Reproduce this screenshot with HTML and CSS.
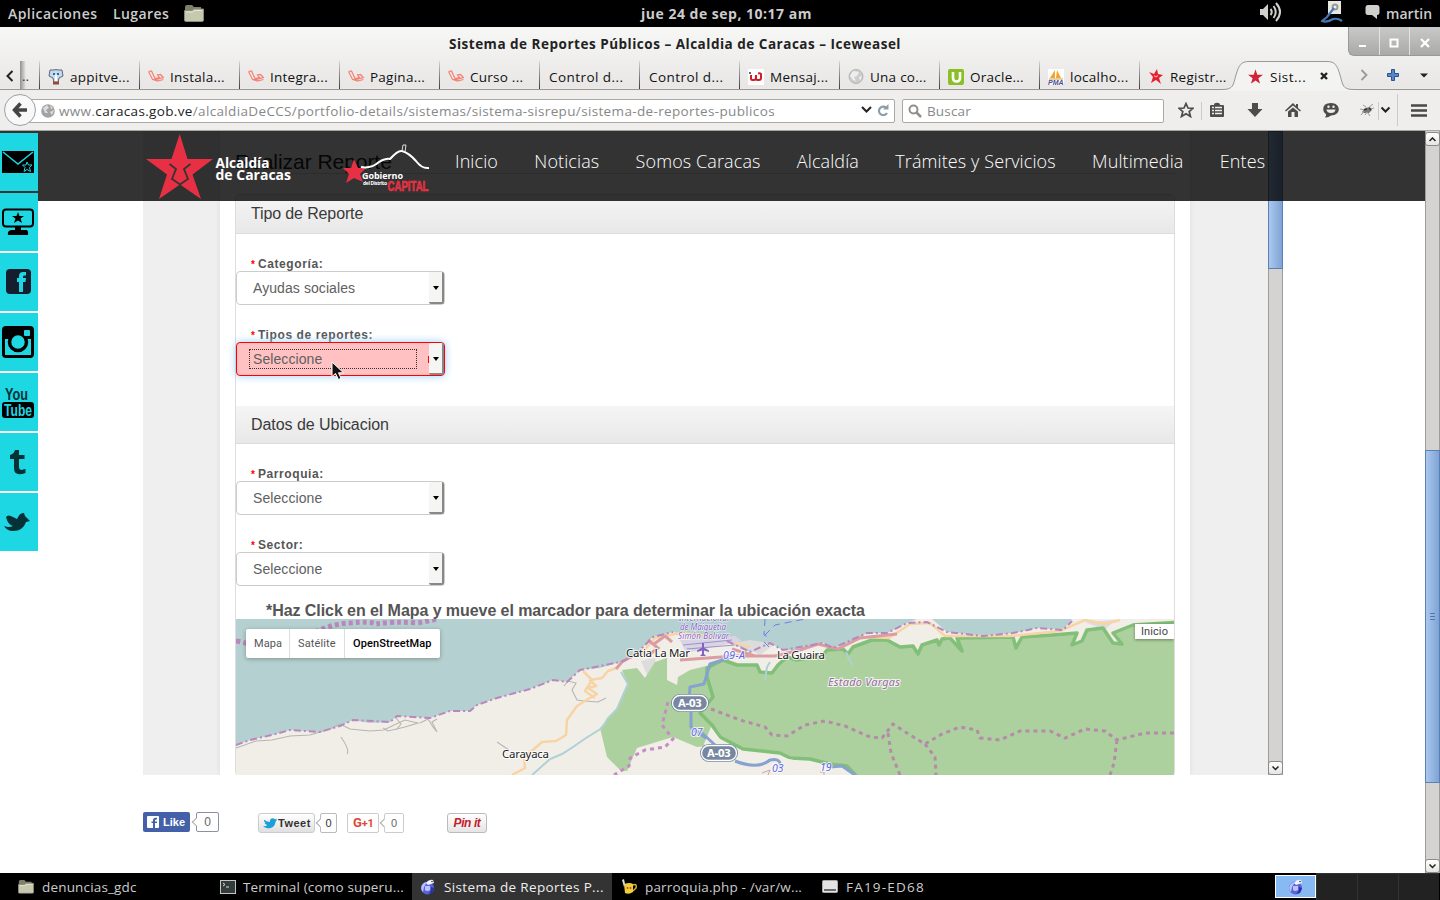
FILE: index.html
```html
<!DOCTYPE html>
<html lang="es">
<head>
<meta charset="utf-8">
<title>Sistema de Reportes Públicos - Alcaldia de Caracas</title>
<link rel="stylesheet" href="styles.css">
</head>
<body>
<svg width="0" height="0" class="defs">
  <defs>
    <symbol id="laravel" viewBox="0 0 16 16"><path d="M.5 2.500 3.500 2 7 9.500 11.500 8.600 9.500 6 12.500 5.500 15.300 8.500 8.500 10.400 9.500 12 15.500 10.500M.5 2.500 4.500 10.500 8.500 10.400M4.500 10.500 9.500 12" fill="none" stroke="#f58173" stroke-width="1.200"/></symbol>
    <symbol id="star" viewBox="0 0 68 66"><path d="M34 0 42 25H68L47 41 55 66 34 51 13 66 21 41 0 25H26Z"/></symbol>
    <symbol id="folder" viewBox="0 0 20 18"><path d="M1 3Q1 1 3 1H8L10 3H17V7H1Z" fill="#7e8069"/><path d="M.5 6.500H8L10 5H19.500V16Q19.500 17.500 18 17.500H2Q.5 17.500 .5 16Z" fill="#c6c8b0" stroke="#8b8d76"/><path d="M2 8H8.500L10.500 6.500H18" stroke="#e6e7d8" fill="none"/></symbol>
    <symbol id="weasel" viewBox="0 0 16 16"><circle cx="7.500" cy="9" r="6.500" fill="#5a63d8"/><path d="M2 6Q4 3 7 3L4 8 3 13Q0 10 2 6ZM5 7H10V11Q7 13 5 11Z" fill="#b9c3ff"/><path d="M6 4Q9 0 13 1L14 4 11 5 8 6Z" fill="#f2f4ff"/><path d="M11 8Q12 12 8 15L12 14 14 9Z" fill="#2a2f9e"/><circle cx="12" cy="2.500" r=".8" fill="#333"/></symbol>
    <symbol id="tweet" viewBox="0 0 26 20"><path d="M0 15Q5 16 8 13 4 12 3 9H5Q1 7 2 3 6 7 13 7C12 0 19-1 22 2L26 1 24 4 26 4 23 7C23 17 11 23 0 15Z"/></symbol>
    <symbol id="bird" viewBox="0 0 26 20"><path d="M0 14Q5 16 9 14 4 13 2 5Q4 2 9 5L13 7Q16 0 20 1L21 4 26 9 22 10Q19 19 9 19 3 19 0 14Z"/></symbol>
  </defs>
</svg>
<div class="screen">
  <div class="panel">
    <span class="p-app">Aplicaciones</span><span class="p-lug">Lugares</span>
    <svg class="p-folder" width="20" height="18"><use href="#folder"/></svg>
    <span class="p-clock">jue 24 de sep, 10:17 am</span>
    <div class="p-tray">
      <svg width="24" height="22" viewBox="0 0 24 22" fill="none" stroke="#d0d0cc" stroke-width="2"><path d="M1 8H4L9 3V19L4 14H1Z" fill="#d0d0cc" stroke="none"/><path d="M11.500 8Q14 11 11.500 14M14.500 5Q19 11 14.500 17M17 2Q25 11 17 20"/></svg>
      <svg class="tray-net" width="22" height="22" viewBox="0 0 22 22"><path d="M7 0H20V13H7Z" fill="#e8e8e3"/><circle cx="14" cy="6" r="3.500" fill="#999"/><circle cx="14" cy="6" r="1.500" fill="#eee"/><path d="M13 7 6 16 1 20Q6 22 12 18 17 17 21 20" fill="none" stroke="#4677b5" stroke-width="2.200"/></svg>
      <svg class="tray-chat" width="15" height="15" viewBox="0 0 15 15"><path d="M3 0H12Q14.500 0 14.500 3V8Q14.500 10 12 10V14L7 10H3Q.5 10 .5 8V3Q.5 0 3 0Z" fill="#d0d0cc"/></svg>
      <span class="p-user">martin</span>
    </div>
  </div>

  <div class="chrome">
    <div class="titlebar">Sistema de Reportes Públicos – Alcaldia de Caracas – Iceweasel
      <div class="winbtns">
        <span><svg width="10" height="10" viewBox="0 0 10 10"><path d="M1 8H8" stroke="#fff" stroke-width="2"/></svg></span>
        <span><svg width="10" height="10" viewBox="0 0 10 10"><path d="M1.500 1.500H8.500V8.500H1.500Z" fill="none" stroke="#fff" stroke-width="2"/></svg></span>
        <span><svg width="10" height="10" viewBox="0 0 10 10"><path d="M1 1 9 9M9 1 1 9" stroke="#fff" stroke-width="2.300"/></svg></span>
      </div>
    </div>
    <div class="tabs">
      <div class="tab-prev"><svg width="8" height="12" viewBox="0 0 8 12"><path d="M6.500 1 1.500 6 6.500 11" fill="none" stroke="#222" stroke-width="2"/></svg></div>
      <div class="tab-cut">..</div>
      <div class="tab"><svg width="16" height="16" viewBox="0 0 16 16"><path d="M2 1H6Q8 0 10 1H14L15 7 11 9 10 14H6L5 9 1 7Z" fill="#c9d8ea" stroke="#59677c"/><path d="M5 5H7M9 5H11" stroke="#147e9c" stroke-width="2"/><path d="M5 14H11" stroke="#984a2c" stroke-width="3"/><path d="M8 6V12" stroke="#fff" stroke-width="2"/></svg><span>appitve...</span></div>
      <div class="tab"><svg width="16" height="16"><use href="#laravel"/></svg><span>Instala...</span></div>
      <div class="tab"><svg width="16" height="16"><use href="#laravel"/></svg><span>Integra...</span></div>
      <div class="tab"><svg width="16" height="16"><use href="#laravel"/></svg><span>Pagina...</span></div>
      <div class="tab"><svg width="16" height="16"><use href="#laravel"/></svg><span>Curso ...</span></div>
      <div class="tab"><span>Control d...</span></div>
      <div class="tab"><span>Control d...</span></div>
      <div class="tab"><svg width="16" height="16" viewBox="0 0 16 16"><path d="M0 0H16V16H0Z" fill="#fff"/><path d="M3 6V9.500Q3 11 4.500 11H6Q8 11 8 9V6M8 9Q8 11 9.500 11H11Q13 11 13 9V5Q13 4 10 4.500" stroke="#cf1d26" stroke-width="2" fill="none"/><circle cx="2" cy="4" r="1" fill="#333"/></svg><span>Mensaj...</span></div>
      <div class="tab"><svg width="16" height="16" viewBox="0 0 16 16"><circle cx="8" cy="7.500" r="7" fill="#ccc" stroke="#b5b5b5"/><path d="M5 2 11 3 9 7 6 8 8 12 5 11 2 7ZM11 8 14 7 12 12Z" fill="#eee"/></svg><span>Una co...</span></div>
      <div class="tab"><svg width="16" height="16" viewBox="0 0 16 16"><rect width="16" height="16" rx="2" fill="#8abf25"/><path d="M5 3V9Q5 12.500 8.500 12.500T12 9V3" fill="none" stroke="#fff" stroke-width="2.600"/></svg><span>Oracle...</span></div>
      <div class="tab"><svg width="16" height="16" viewBox="0 0 16 16"><path d="M0 0H16V16H0Z" fill="#fff"/><path d="M7 1V9H2ZM9 1 13 9H8Z" fill="#f5a429"/><path d="M1 10H15" stroke="#c9a24e"/><text x="0" y="16" class="pma">PMA</text></svg><span>localho...</span></div>
      <div class="tab"><svg width="16" height="16" viewBox="0 0 16 16"><path d="M1 3 6 5 9 0 10 5 15 6 11 9 13 15 8 11 3 14 5 8Z" fill="#e7202d"/><path d="M6 6.500 8 8 10 6.500" stroke="#fff" stroke-width=".8" fill="none"/></svg><span>Registr...</span></div>
      <div class="tab-active">
        <svg class="tab-shape" width="132" height="30" viewBox="0 0 132 30"><path d="M0 28.500C12 28.500 11 24 14 14 17 4 19 .5 27 .5H105C113 .5 115 4 118 14 121 24 120 28.500 132 28.500V30H0Z" fill="#f3f3f2"/><path d="M0 28.500C12 28.500 11 24 14 14 17 4 19 .5 27 .5H105C113 .5 115 4 118 14 121 24 120 28.500 132 28.500" fill="none" stroke="#999894"/></svg>
        <svg class="ta-ic" width="15" height="15" viewBox="0 0 68 66" fill="#cf243a"><use href="#star"/></svg><span class="ta-t">Sist...</span>
        <svg class="ta-x" width="8" height="8" viewBox="0 0 8 8"><path d="M1 1 7 7M7 1 1 7" stroke="#222" stroke-width="2.400"/></svg>
      </div>
      <div class="tab-tools">
        <svg width="8" height="12" viewBox="0 0 8 12"><path d="M1.500 1 6.500 6 1.500 11" fill="none" stroke="#999" stroke-width="1.800"/></svg>
        <svg width="12" height="12" viewBox="0 0 12 12"><path d="M4.500.5H7.500V4.500H11.500V7.500H7.500V11.500H4.500V7.500H.5V4.500H4.500Z" fill="#5a87c4" stroke="#2a5594"/></svg>
        <svg width="8" height="5" viewBox="0 0 8 5"><path d="M0 .5H8L4 4.500Z" fill="#222"/></svg>
      </div>
    </div>
    <div class="navbar">
      <div class="url">
        <svg class="globe" width="14" height="14" viewBox="0 0 14 14"><circle cx="7" cy="7" r="6.800" fill="#a3a3a3"/><path d="M2 4 6 1 8 4 5 6 7 9 4 9ZM9 8 13 6 11 11ZM9 1 12 4 10 5Z" fill="#ddd"/></svg>
        <span class="addr">www.<b>caracas.gob.ve</b>/alcaldiaDeCCS/portfolio-details/sistemas/sistema-sisrepu/sistema-de-reportes-publicos</span>
        <svg class="url-dd" width="11" height="7" viewBox="0 0 11 7"><path d="M1 1 5.500 5.500 10 1" fill="none" stroke="#222" stroke-width="2"/></svg>
        <svg class="reload" width="12" height="12" viewBox="0 0 12 12"><path d="M9 3.500A4.300 4.300 0 1 0 10 9" fill="none" stroke="#8c9cab" stroke-width="2.200"/><path d="M6 5.500H11.500V0Z" fill="#8c9cab"/></svg>
      </div>
      <div class="back"><svg width="16" height="16" viewBox="0 0 16 16"><path d="M8.500 1.500 2.500 8 8.500 14.500M3 8H15" fill="none" stroke="#444" stroke-width="3.500"/></svg></div>
      <div class="search"><svg width="14" height="14" viewBox="0 0 14 14"><circle cx="5.500" cy="5.500" r="4" fill="none" stroke="#8f8f8f" stroke-width="2"/><path d="M8.500 8.500 13 13" stroke="#8f8f8f" stroke-width="2.500"/></svg><span>Buscar</span></div>
      <div class="tools">
        <svg width="16" height="16" viewBox="0 0 16 16"><path d="M8 1.500 10 6 15 6.300 11.200 9.500 12.500 14.500 8 11.700 3.500 14.500 4.800 9.500 1 6.300 6 6Z" fill="none" stroke="#4c4c4c" stroke-width="1.700"/></svg>
        <svg width="16" height="16" viewBox="0 0 16 16"><path d="M2 3H5Q5 .8 8 .8T11 3H14Q15 3 15 4V14Q15 15 14 15H2Q1 15 1 14V4Q1 3 2 3Z" fill="#4c4c4c"/><path d="M3 5.500H5M3 8.500H5M3 11.500H5M6 5.500H13M6 8.500H13M6 11.500H13" stroke="#eee" stroke-width="1.600"/></svg>
        <svg width="16" height="16" viewBox="0 0 16 16"><path d="M5 1H11V7H15.500L8 15 .5 7H5Z" fill="#4c4c4c"/></svg>
        <svg width="16" height="16" viewBox="0 0 16 16"><path d="M0 8.500 8 1 11 4V2H13V6L16 8.500 15 9.500 8 3.500 1 9.500Z" fill="#4c4c4c"/><path d="M3 9.500 8 5.500 13 9.500V15H9.500V10H6.500V15H3Z" fill="#4c4c4c"/></svg>
        <svg width="16" height="16" viewBox="0 0 16 16"><path d="M8 1C13 1 15.800 4 15.800 7.300S13 13.500 8 13.500Q5 15.800 2 15.300 3.500 14 3 12.300 .2 10.500 .2 7.300 .2 1 8 1Z" fill="#4c4c4c"/><path d="M3.500 7.500H12.500Q12 11 8 11T3.500 7.500Z" fill="#eee"/><circle cx="5.500" cy="4.800" r="1.200" fill="#eee"/><circle cx="10.500" cy="4.800" r="1.200" fill="#eee"/></svg>
        <svg width="16" height="16" viewBox="0 0 16 16"><path d="M3 10 6 6 11 5 13 8 10 11 5 11Z" fill="#777"/><path d="M1 7 6 8 2 13M6 13 8 10 11 14M7 5 4 3M9 6 14 2M11 7 15 6" stroke="#999" fill="none"/><path d="M5 8 8 7M10 6 12 8" stroke="#333" stroke-width="1.500"/></svg>
        <svg width="11" height="8" viewBox="0 0 11 8"><path d="M1.500 1.500 5.500 5.500 9.500 1.500" fill="none" stroke="#222" stroke-width="2"/></svg>
        <svg width="16" height="13" viewBox="0 0 16 13"><path d="M0 1.500H16M0 6.500H16M0 11.500H16" stroke="#484848" stroke-width="2.600"/></svg>
      </div>
      <div class="nav-line l1"></div><div class="nav-line l2"></div><div class="nav-line l3"></div>
    </div>
  </div>

  <div class="viewport">
    <div class="page">
      <div class="frame">
        <div class="frame-body">
          <div class="sheet">
            <div class="ghost">Realizar Reporte</div>
            <div class="card">
              <h2 class="sec first">Tipo de Reporte</h2>
              <div class="field"><label><i>*</i>Categoría:</label><div class="select"><span>Ayudas sociales</span><em></em></div></div>
              <div class="field"><label><i>*</i>Tipos de reportes:</label><div class="select error"><span>Seleccione</span><em></em>
                <svg class="cursor" width="14" height="20" viewBox="0 0 14 20"><path d="M1 1V15.500L4.500 12.500 7.500 18.500 10 17.300 7.500 11.800H12.500Z" fill="#111" stroke="#fff"/></svg></div></div>
              <h2 class="sec second">Datos de Ubicacion</h2>
              <div class="field"><label><i>*</i>Parroquia:</label><div class="select"><span>Seleccione</span><em></em></div></div>
              <div class="field last"><label><i>*</i>Sector:</label><div class="select"><span>Seleccione</span><em></em></div></div>
              <div class="hint">*Haz Click en el Mapa y mueve el marcador para determinar la ubicación exacta</div>
              <div class="map">
                <svg width="938" height="156" viewBox="236 619 938 156">
                  <path d="M236 619H1174V775H236Z" fill="#b5d0d0"/>
                  <path d="M236 745 250 740 272 735 290 730 320 732 340 726 353 720 370 723 390 722 397 716 415 717 430 718 450 711 470 711 477 705 497 698 530 689 553 680 567 682 580 670 600 668 620 662 632 657 643 647 653 637 673 632 690 636 727 641 750 652 762 651 770 643 783 650 800 650 823 643 833 648 850 643 867 633 887 633 907 623 917 619H932L947 632 983 636 1013 633 1037 628 1063 630 1072 619H1174V775H236Z" fill="#f1eee8"/>
                  <path d="M641 661 655 658 658 679 648 677ZM735 643 750 640 775 644 760 655ZM1085 622 1115 620 1105 630Z" fill="#dddcdd"/>
                  <path d="M622 670 637 668 645 678 655 662 667 658V680L677 685 678 677 690 670 710 665 720 745 697 747 673 737 637 748 627 771 620 770 607 757 600 728 618 707 628 685Z" fill="#add19e"/>
                  <path d="M707 668 723 660 737 665 757 665 760 672 772 673 778 665 787 657 797 660 823 655 827 650 843 649 848 654 853 647 872 640 887 640 900 647 913 646 918 654 922 645 937 640 939 645 942 639 950 638 962 651 957 638 1013 637 1016 648 1022 637 1053 635 1077 633 1072 645 1082 641 1087 630 1103 628 1113 643 1122 644 1113 633 1133 625 1180 622V782H862L847 766 830 764 810 759 790 758 780 753 743 749 720 737 712 725 700 713 713 697 707 677Z" fill="#add19e" stroke="#82bf79" stroke-width="3.500" stroke-linejoin="round"/>
                  <path d="M236 748 256 741 272 740 290 736 310 735 330 729 340 724 350 729 370 731 384 730 394 725 405 720 418 723 405 727 388 731 383 728M396 718 401 724 396 730M420 723 428 719 433 727 437 732 432 722 437 719M341 737Q350 750 347 754M497 742 509 750M564 686 568 681 576 683 572 690 577 700 584 701 598 702 606 698" fill="none" stroke="#b8b5b0" stroke-width="1.100"/>
                  <path d="M512 775 525 768 524 757 534 749 542 742 556 741 566 735 567 720 577 706 588 699 597 694 588 688 596 686 590 680 602 678 608 671 616 668M583 671 592 680 585 691 595 698M640 655 655 638 680 633 710 636 750 647M867 637 889 638 910 624 930 623 945 636 1010 636 1060 631 1085 620 1105 624 1120 620" fill="none" stroke="#f8d3a5" stroke-width="2.500" stroke-linejoin="round"/>
                  <path d="M616 669 622 662 636 654M648 640 658 648 650 654M654 644 665 636 672 642M680 660 735 656 775 656 800 650 818 644 838 649 860 638 897 634M732 649 755 656" fill="none" stroke="#dc9da0" stroke-width="3"/>
                  <path d="M532 775 540 768 550 759 562 754 573 747 586 738 602 728 608 718 617 709 623 695 628 684 621 672M765 680 767 667 770 662M846 652 852 665" fill="none" stroke="#aed1d5" stroke-width="2"/>
                  <path d="M680 640 735 636 742 641 686 653Z" fill="#d9d4e5"/><path d="M683 645 732 640M687 649 735 645" stroke="#9c94c3"/>
                  <path d="M236 745 250 740 272 735 290 730 320 732 340 726 353 720 390 722 397 716 430 718 450 711 470 711 477 705 497 698 530 689 553 680 567 682 580 670 620 662 632 657 643 647 653 637 673 632M727 641 750 652 770 643 783 650 823 643 833 648 867 633 887 633 907 623 927 622 947 632 983 636 1013 633 1037 628 1063 630 1072 621" fill="none" stroke="#b987bd" stroke-width="2" stroke-dasharray="7 3 2 3"/>
                  <path d="M236 641Q243 642 248 644M315 632Q335 623 350 623 370 621 376 624 393 621 418 623 428 621 438 619" fill="none" stroke="#b987bd" stroke-width="5" stroke-dasharray="4 3"/>
                  <g fill="none" stroke="#b58ba9" stroke-width="3" stroke-dasharray="4 4"><path d="M711 709 740 720 765 727 772 735 787 736 805 725 825 721 845 726 870 737 882 738 893 724 910 735 925 744 942 734 960 727 977 730 980 738 1000 740 1020 731 1050 731 1065 738 1085 729 1105 731 1117 740 1145 733 1174 733M888 733 891 753 900 775M925 744 935 757 936 775M1117 740 1114 763 1110 775"/><path d="M668 702 662 725 673 739 665 747 645 750 630 758 629 766 614 775" stroke="#c58dc4"/></g>
                  <path d="M765 619 764 635 770 638M765 635 775 625 805 619M764 642 772 650" fill="none" stroke="#6c7df0" stroke-dasharray="7 5"/>
                  <path d="M735 656 710 664 704 684 690 687 689 700M691 710 691 727 697 732 712 742" fill="none" stroke="#86a2cf" stroke-width="3" stroke-linejoin="round"/>
                  <path d="M711 727 722 742 742 753 778 757 810 763 845 769 851 775H735L719 760 704 744Z" fill="#f1eee8"/>
                  <path d="M702 733 715 745M735 761Q758 770 770 760 782 757 780 769M830 767 842 766 855 775" fill="none" stroke="#86a2cf" stroke-width="3"/>
                  <path d="M762 773 770 770 768 775M820 772H824V776" stroke="#cda6a6" fill="none"/>
                  <path d="M702 643H704V647.500L709 650.500V652L704 650.500V654L706 656H700L702 654V650.500L697 652V650.500L702 647.500Z" fill="#8461c4"/>
                  <g class="ap"><text x="679" y="621" textLength="50">Internacional</text><text x="680" y="630" textLength="46">de Maiquetía</text><text x="678" y="639" textLength="51">Simón Bolívar</text></g>
                  <g class="town"><text x="626" y="657" textLength="64">Catia La Mar</text><text x="777" y="659" textLength="48">La Guaira</text><text x="502" y="758" textLength="47">Carayaca</text></g>
                  <text class="state" x="828" y="686" textLength="72">Estado Vargas</text>
                  <g class="road"><text x="723" y="659" textLength="22">09-A</text><text x="691" y="736">07</text><text x="772" y="772">03</text><text x="820" y="771">19</text></g>
                  <g class="shield"><rect class="rim" x="671" y="694" width="38" height="18" rx="9"/><rect x="672.500" y="695.500" width="35" height="15" rx="7.500"/><rect class="rim" x="700" y="744" width="38" height="18" rx="9"/><rect x="701.500" y="745.500" width="35" height="15" rx="7.500"/><text x="678" y="707" textLength="24">A-03</text><text x="707" y="757" textLength="24">A-03</text></g>
                </svg>
                <div class="maptypes"><span>Mapa</span><span>Satélite</span><span class="on">OpenStreetMap</span></div>
                <div class="home">Inicio</div>
              </div>
            </div>
          </div>
        </div>
        <div class="sbar inner"><div class="thumb"></div><div class="sbtn down"><svg width="7" height="5" viewBox="0 0 7 5"><path d="M.5.5 3.500 3.500 6.500.5" fill="none" stroke="#222" stroke-width="1.500"/></svg></div></div>
      </div>
      <div class="share">
        <div class="fb"><svg width="12" height="12" viewBox="0 0 12 12"><rect width="12" height="12" rx="1" fill="#fff"/><path d="M8 12V7H10V5.500H8V4.500Q8 3.500 9 3.500H10V1.800H8.500Q6 1.800 6 4.500V5.500H4.500V7H6V12Z" fill="#4460a8"/></svg>Like</div>
        <div class="count c-fb">0</div>
        <div class="tw"><svg width="14" height="11" fill="#1b9fd9" viewBox="0 0 26 20"><use href="#tweet" width="26" height="20"/></svg>Tweet</div>
        <div class="count c-tw">0</div>
        <div class="gp">G<small>+1</small></div>
        <div class="count c-gp">0</div>
        <div class="pin">Pin it</div>
      </div>
      <div class="site-header">
        <svg class="brand" width="150" height="70" viewBox="143 131 150 70"><path d="M179.700 134 187.500 159H213L192.500 174.500 201 199 180 184.500 159 199 167 174.500 146 159H171.500Z" fill="#e73044"/><path d="M169.500 164 176 169 174 174 172 179 180 184.500 188 179 186 174 184 169 190.500 164" fill="none" stroke="#333" stroke-width="1.800"/><text x="215.500" y="168" textLength="54" lengthAdjust="spacingAndGlyphs">Alcaldía</text><text x="215.500" y="180" textLength="75.500" lengthAdjust="spacingAndGlyphs">de Caracas</text></svg>
        <svg class="gov" width="90" height="60" viewBox="342 141 90 60"><path d="M354 159 358 168H366L360 174 363 182 354 178 346 183 349 174 343 168H351Z" fill="#e73044"/><path d="M361 167Q371 169 379 162 386 158 390 159 398 150 402 151 409 153 416 161 422 169 429 168" fill="none" stroke="#fff" stroke-width="2"/><path d="M402 151 403 145H406L405 152" fill="none" stroke="#ddd"/><text x="362" y="179" class="g1" textLength="41">Gobierno</text><text x="363" y="185" class="g2" textLength="24">del Distrito</text><text x="387.500" y="191" class="g3" textLength="41" lengthAdjust="spacingAndGlyphs">CAPITAL</text></svg>
        <nav><a>Inicio</a><a>Noticias</a><a>Somos Caracas</a><a>Alcaldía</a><a>Trámites y Servicios</a><a>Multimedia</a><a>Entes</a></nav>
      </div>
      <div class="social">
        <div><svg width="32" height="24" viewBox="0 0 32 24"><path d="M0 1H32V23H0Z"/><path d="M1 2 16 14 31 2" fill="none" stroke="#1dd7e2" stroke-width="1.500"/><path d="M25 12 26.500 15H30L27.500 17.500 28.500 21.500 25 19.500 22 21.500 23 17.500 20.500 15H24Z" fill="none" stroke="#1dd7e2"/></svg></div>
        <div><svg width="32" height="28" viewBox="0 0 32 28"><rect x="1" y="1.500" width="30" height="17" rx="3" fill="none" stroke="#000" stroke-width="2"/><path d="M16 4 17.500 8H22L18.500 10.500 20 15 16 12.500 12 15 13.500 10.500 10 8H14.500Z"/><path d="M13 18H19V22H25Q27 24 26 27H6Q5 23 9 22H13Z"/></svg></div>
        <div><svg width="26" height="26" viewBox="0 0 26 26"><rect x="1" width="25" height="25" rx="4" fill="#141e2e"/><path d="M14 23V13H12V9H14V7Q14 3 18 3H21V6.500H19Q18 6.500 18 8V9H21L20.500 13H18V23Z" fill="#1dd7e2"/></svg></div>
        <div><svg width="32" height="32" viewBox="0 0 32 32"><rect width="32" height="32" rx="4"/><path d="M3 13H8V17Q10 25 16 25T24 17V13H29V29H3Z" fill="#1dd7e2"/><circle cx="16" cy="16" r="8.500" fill="#1dd7e2" stroke="#000" stroke-width="3.500"/><rect x="22" y="4" width="6" height="6" rx="1" fill="#1dd7e2"/></svg></div>
        <div><svg width="32" height="32" viewBox="0 0 32 32"><text x="3" y="14" class="yt" textLength="23" lengthAdjust="spacingAndGlyphs" fill="#063238">You</text><rect y="16" width="32" height="16" rx="3"/><text x="2" y="30" class="yt" textLength="28" lengthAdjust="spacingAndGlyphs" fill="#1dd7e2">Tube</text></svg></div>
        <div><svg width="16" height="26" viewBox="0 0 16 26"><path d="M5 1H9V6H14.500V10H9V18Q9 21 12 21 14 20 15.500 20V24Q4 28 4 19V10H0V6Q4 5 5 1Z" fill="#063137"/></svg></div>
        <div><svg class="bird" width="26" height="20" fill="#063137"><use href="#bird" width="26" height="20"/></svg></div>
      </div>
    </div>
    <div class="sbar outer"><div class="sbtn up"><svg width="7" height="5" viewBox="0 0 7 5"><path d="M.5 4 3.500 1 6.500 4" fill="none" stroke="#222" stroke-width="1.500"/></svg></div><div class="thumb"><i></i></div><div class="sbtn down"><svg width="7" height="5" viewBox="0 0 7 5"><path d="M.5.5 3.500 3.500 6.500.5" fill="none" stroke="#222" stroke-width="1.500"/></svg></div></div>
  </div>

  <div class="taskbar">
    <div class="task t1"><svg width="16" height="15" viewBox="0 0 20 18"><use href="#folder"/></svg><span>denuncias_gdc</span></div>
    <div class="task t2"><svg width="16" height="14" viewBox="0 0 16 14"><rect x=".5" y=".5" width="15" height="13" fill="#333b3b" stroke="#c5c5c5"/><path d="M3 3 5 4.500 3 6M6 7H9" stroke="#ddd" fill="none"/></svg><span>Terminal (como superu...</span></div>
    <div class="task t3"><svg width="16" height="16"><use href="#weasel"/></svg><span>Sistema de Reportes P...</span></div>
    <div class="task t4"><svg width="16" height="16" viewBox="0 0 16 16"><path d="M3 5Q9 3 12 5L12 13Q8 16 4 14Z" fill="#f0ce37"/><path d="M12 6Q16 4 15 9L12 12" fill="none" stroke="#d9b52b" stroke-width="1.500"/><path d="M1 1 3 0 4 5 3 8Z" fill="#ddd"/><circle cx="6.500" cy="9" r="1" fill="#c44"/><circle cx="9.500" cy="9" r="1" fill="#c44"/></svg><span>parroquia.php - /var/w...</span></div>
    <div class="task t5"><svg width="16" height="13" viewBox="0 0 16 13"><rect x=".5" y=".5" width="15" height="12" rx="1" fill="#e4e4e4" stroke="#aaa"/><path d="M2 10H14" stroke="#444" stroke-width="1.500"/></svg><span>FA19-ED68</span></div>
    <div class="spaces"><div class="cur"><svg width="16" height="16"><use href="#weasel"/></svg></div><div></div><div></div><div></div></div>
  </div>
</div>
</body>
</html>
```
FILE: styles.css
```css
*{box-sizing:border-box}
body{margin:0;background:#fff}
svg{display:block;flex:none}
.defs{position:absolute}
.screen{width:1440px;height:900px;display:flex;flex-direction:column;overflow:hidden;font-family:"Open Sans","Noto Sans",sans-serif;font-size:14px;white-space:nowrap}
.panel{height:27px;background:#000;color:#ccc;display:flex;align-items:center;font-weight:600;line-height:29px;flex:none;padding-left:8px;position:relative}
.p-app{width:105px;letter-spacing:.45px}
.p-lug{width:71px;letter-spacing:.4px}
.p-folder{margin-top:-2px}
.p-clock{position:absolute;left:0;right:0;text-align:center;padding-left:13px;font-weight:700;letter-spacing:.5px}
.p-tray{margin-left:auto;display:flex;width:181px;align-items:center}
.p-tray svg{margin-top:-3px}
.p-tray .tray-net{margin-left:38px}
.p-tray .tray-chat{margin-left:22px}
.p-user{margin-left:6px;letter-spacing:.05px}
.chrome{height:103px;flex:none;background:linear-gradient(#f7f7f6,#e8e7e6 60px,#efeeed 64px,#efeeed);display:flex;flex-direction:column}
.titlebar{height:34px;line-height:34px;text-align:center;font-weight:700;font-size:13.500px;color:#222;padding-right:90px;position:relative;letter-spacing:.51px}
.winbtns{position:absolute;right:0;top:0;width:92px;height:29px;display:flex;background:linear-gradient(#c9c9c8,#a9a9a7);border:1px solid #999;border-width:0 0 1px 1px;border-radius:0 0 0 6px}
.winbtns span{flex:1;display:flex;align-items:center;justify-content:center;border-left:1px solid #e2e2e1;padding:3px 1px 0 0}
.winbtns span:first-child{border:0}
.tabs{height:29px;display:flex;border-bottom:1px solid #999894;flex:none;font-size:13.500px;color:#111}
.tab-prev{width:20px;padding:9px 0 0 6px}
.tab-cut{width:19px;padding:6px 0 0 2px;background:linear-gradient(90deg,#8f8f8e,transparent 6px);color:#333}
.tab{width:100px;display:flex;align-items:center;gap:6px;padding:3px 0 0 8px;border-left:1px solid;border-image:linear-gradient(#dedddc,#333) 1}
.tab svg+span{letter-spacing:.25px}
.tab span:first-child{padding-left:1px;letter-spacing:.45px}
.tab-active{position:relative;width:106px;flex:none;margin-left:-5px;display:flex;padding-top:3px;align-items:center}
.tab-shape{position:absolute;left:-12px;top:0}
.ta-ic,.ta-t,.ta-x{position:relative}
.ta-ic{margin-left:14px}
.ta-t{margin-left:7px;letter-spacing:.5px}
.ta-x{margin-left:14px;margin-top:-2px}
.tab-tools{display:flex;align-items:center;gap:21px;padding-left:20px}
.tab-tools svg:nth-child(2){margin-left:-2px}
.navbar{height:40px;display:flex;align-items:center;position:relative;padding-left:20px}
.nav-line{position:absolute;width:1px;background:#c8cbd0;top:12px;height:18px}
.l1{left:1201px}
.l2{left:1378px}
.l3{left:1397px;top:4px;height:32px}
.url{width:875px;height:24px;margin-top:1px;background:#fff;border:1px solid #aaa9a6;border-radius:2px;display:flex;align-items:center;color:#888;padding-left:20px;font-size:13.500px}
.addr{width:806px;margin-left:4px;letter-spacing:.35px}
.addr b{font-weight:400;color:#222}
.url-dd{margin:-2px 0 0 -4px}
.reload{margin:-1px 0 0 5px}
.back{position:absolute;left:4px;top:4px;width:32px;height:32px;border:1px solid #9ba1a8;border-radius:50%;background:#f8f8f8;display:flex;align-items:center;justify-content:center}
.search{margin:1px 0 0 7px;width:262px;height:24px;background:#fff;border:1px solid #aaa9a6;border-radius:2px;display:flex;align-items:center;gap:5px;padding-left:5px;color:#888;font-size:13.500px;letter-spacing:.15px}
.tools{display:flex;align-items:center;margin-left:14px}
.tools svg+svg{margin-left:15px}
.tools svg:nth-child(n+3):nth-child(-n+5){margin-left:22px}
.tools svg:nth-child(6){margin-left:20px}
.tools svg:nth-child(7){margin-left:5px}
.tools svg:nth-child(8){margin-left:20px}
.viewport{height:743px;flex:none;display:flex;border-top:1px solid #a8a7a2}
.page{width:1425px;height:742px;position:relative;background:#fff;padding-left:143px;overflow:hidden}
.frame{width:1140px;height:644px;display:flex}
.frame-body{width:1125px;background:#efefef;padding-left:77px;overflow:hidden}
.sheet{width:970px;height:644px;background:#fff;padding:0 15px;box-shadow:0 0 5px #ddd;overflow:hidden}
.ghost{height:43px;border-bottom:1px solid #ddd;margin-bottom:20px;font:21px/62px "Liberation Sans",sans-serif;color:#222;letter-spacing:-.05px}
.card{border:1px solid #ddd;border-radius:4px;font-family:"Liberation Sans",Arial,sans-serif}
.sec{margin:0;height:38px;border-bottom:1px solid #dcdcdc;background:linear-gradient(#f5f5f5,#e8e8e8);padding-left:15px;font-size:16px;font-weight:400;line-height:37px;color:#3a3a3a;letter-spacing:-.05px}
.sec.first{height:39px;margin-bottom:22px;letter-spacing:-.13px}
.sec.second{margin:8px 0 22px}
.field{height:71px}
.field.last{height:63px}
.field label{display:block;height:15px;line-height:16px;padding-left:15px;font-size:12px;font-weight:700;color:#555;letter-spacing:.6px}
.field i{color:red;font-style:normal;font-size:10px;margin-right:3px;letter-spacing:0;font-weight:700}
.select{width:209px;height:34px;border:1px solid #ccc;border-radius:4px;position:relative;display:flex;justify-content:space-between;font-size:14px;line-height:33px;color:#606060;letter-spacing:.08px;padding-left:16px}
.select em{width:15px;height:32px;background:#f5f5f3;border-right:2px solid #888;border-bottom:2px solid #888;border-radius:2px;display:flex;align-items:center;justify-content:center;padding:2px 0 0 1px}
.select em:after{content:"";border:3.500px solid transparent;border-top:4px solid #000;border-bottom:0}
.select.error{border-color:red;background:#ffc1c1;box-shadow:0 0 8px #9acdf5;padding-left:12px}
.select.error span{width:168px;height:20px;margin-top:6px;border:1px dotted #333;line-height:19px;padding-left:3px}
.select.error em:before{content:"";position:absolute;left:191px;top:13px;width:1px;height:7px;background:red}
.cursor{position:absolute;left:94px;top:18px}
.hint{height:19px;padding-left:30px;font-size:16px;font-weight:700;line-height:21px;color:#555;letter-spacing:-.065px}
.map{height:156px;position:relative;overflow:hidden}
.map text{paint-order:stroke;stroke:#fff;stroke-width:2px;stroke-opacity:.8;font-family:"Noto Sans",sans-serif}
.map .ap text{font-size:8px;font-style:italic;fill:#8461c4;stroke-width:1px}
.map .town text{font-size:11.500px;fill:#222}
.map .state{font-size:11px;font-style:italic;fill:#996aa5}
.map .road text{font-size:10.500px;font-style:italic;fill:#6265e8}
.map .shield text{font-size:10px;font-weight:700;fill:#fff;stroke:none;font-family:"DejaVu Sans",sans-serif}
.shield rect{fill:#77879f;stroke:#fff;stroke-width:1.300}
.shield .rim{stroke:none}
.maptypes{position:absolute;left:10px;top:10px;height:29px;display:flex;background:#fff;border-radius:2px;box-shadow:0 1px 4px rgba(0,0,0,.3);font:11px/29px Roboto,sans-serif;color:#565656;letter-spacing:.12px}
.maptypes span{padding:0 8px;border-right:1px solid #ddd;width:44px}
.maptypes span+span{width:55px}
.maptypes span.on{color:#000;font-weight:500;border:0;width:95px}
.home{position:absolute;right:0;top:5px;width:39px;height:15px;background:#fff;box-shadow:0 1px 3px rgba(0,0,0,.4);font:11px/15px Roboto,sans-serif;color:#444;text-align:center;letter-spacing:.1px}
.sbar{width:15px;background:#d5d3d1;border:1px solid #9d9c9a;border-width:0 1px;flex:none;display:flex;flex-direction:column}
.sbar .thumb{margin:0 -1px;border:1px solid #5a81b5;background:linear-gradient(90deg,#abc8ed,#7fa3d6)}
.inner .thumb{height:138px}
.sbtn{height:14px;margin:0 -1px;border:1px solid #8b8a88;border-radius:3px;background:linear-gradient(#fff,#e5e5e3);display:flex;align-items:center;justify-content:center}
.sbtn.down{margin-top:auto}
.outer .up{margin-top:1px}
.outer .thumb{height:333px;margin-top:304px;display:flex;align-items:center;justify-content:center}
.outer .thumb i{width:5px;height:8px;background:repeating-linear-gradient(#4d77ad 0 1px,transparent 1px 3px)}
.share{display:flex;margin-top:37px;font-family:"Liberation Sans",Arial,sans-serif;font-size:11px;height:22px}
.fb{width:47px;height:20px;border-radius:2px;background:#4460a8;color:#fff;display:flex;align-items:center;gap:4px;padding-left:4px;font-weight:700;font-size:11px}
.count{border:1px solid #bbb;border-radius:2px;height:20px;margin-top:1px;line-height:18px;text-align:center;position:relative;color:#666;background:#fff}
.count:before{content:"";position:absolute;left:-4px;top:6px;width:5px;height:5px;border:1px solid #aaa;border-width:0 0 1px 1px;transform:rotate(45deg);background:#fff}
.c-fb{width:23px;margin:0 0 0 6px;border-color:#8b90a0;font-size:12px}
.c-tw{width:17px;margin-left:5px;color:#333}
.c-gp{width:20px;margin-left:5px;border-color:#ccc}
.tw{margin:1px 0 0 39px;width:57px;height:20px;border:1px solid #ccc;border-radius:3px;background:linear-gradient(#fff,#e0e0e0);color:#333;font-weight:700;display:flex;align-items:center;padding-left:4px;gap:1px;font-size:11px;letter-spacing:.5px}
.gp{margin:1px 0 0 10px;width:32px;height:20px;border:1px solid #ccc;border-radius:2px;color:#dc4a38;font:700 13px/18px Roboto,sans-serif;padding-left:5px;letter-spacing:-.2px}
.gp small{font-size:11px}
.pin{margin:1px 0 0 43px;width:40px;height:20px;border:1px solid #bbb;border-radius:3px;background:linear-gradient(#fff,#e5e5e5);color:#c1202c;font-weight:700;font-style:italic;font-size:12px;line-height:18px;text-align:center;letter-spacing:-.4px}
.site-header{position:absolute;left:0;top:0;width:1425px;height:70px;background:rgba(0,0,0,.8);display:flex;padding-left:143px}
.brand text{font:700 15px "Open Sans",sans-serif;fill:#fff}
.gov{margin:10px 0 0 49px}
.gov text{fill:#fff;font-family:"Open Sans",sans-serif;font-weight:700}
.gov .g1{font-size:9px}
.gov .g2{font-size:5px}
.gov .g3{font-size:14px;fill:#e73044;font-family:"Liberation Sans",sans-serif;stroke:#e73044;stroke-width:.7}
nav{display:flex;gap:36.300px;margin-left:23px;font:300 18px/60px "Open Sans",sans-serif;color:#fff;letter-spacing:.1px}
.social{position:absolute;left:0;top:2px;width:38px;display:flex;flex-direction:column;gap:2px}
.social div{height:58px;background:#1dd7e2;display:flex;align-items:center;justify-content:center;padding-right:2px}
.social .bird{margin-left:-2px}
.yt{font:700 16px "Liberation Sans Narrow","Liberation Sans",sans-serif}
.pma{font:italic 700 7px "Liberation Sans",sans-serif;fill:#4c4b92}
.taskbar{height:27px;background:#000;color:#ccc;display:flex;flex:none;font-size:13.500px;line-height:28px;letter-spacing:.17px}
.task{display:flex;align-items:center;padding-left:18px;gap:8px;width:202px}
.task.t2{width:210px;gap:7px}
.task.t3{width:200px;background:#333;color:#eee;padding-left:8px;letter-spacing:.35px}
.task.t4{padding-left:9px;width:201px}
.task.t5{padding-left:9px;letter-spacing:1.200px}
.spaces{margin-left:auto;width:165px;display:flex}
.spaces div{width:41px;background:#222;border-left:1px solid #333;border-top:1px solid #333}
.spaces .cur{background:#87b9f3;border:1px solid #fff;display:flex;align-items:center;justify-content:center;margin:2px 0}
```
